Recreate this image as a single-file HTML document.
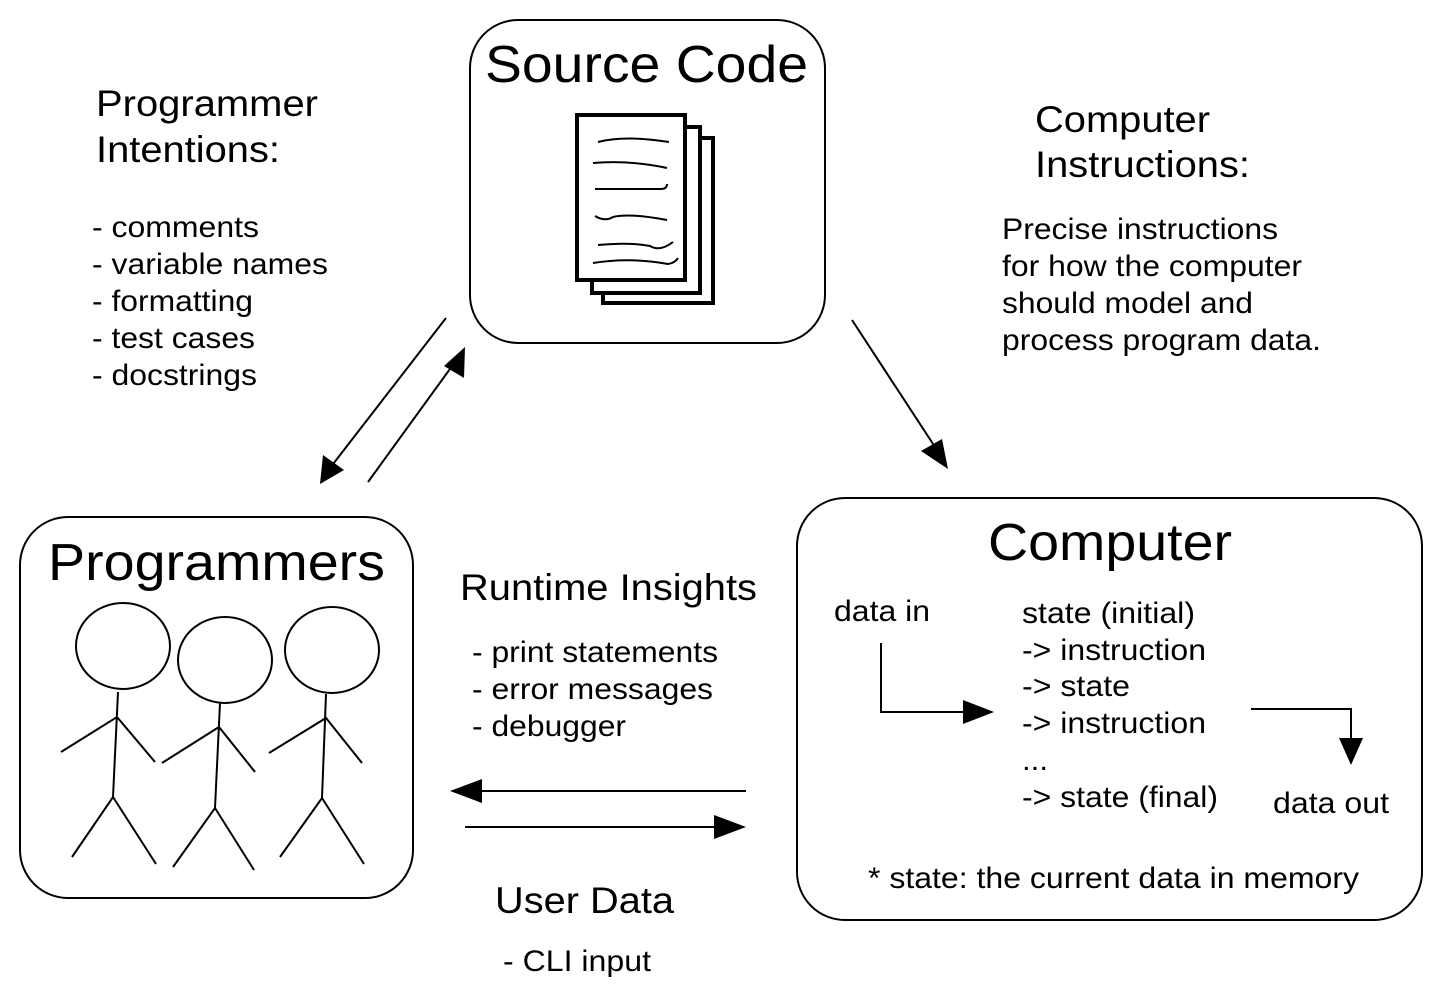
<!DOCTYPE html>
<html><head><meta charset="utf-8"><style>
html,body{margin:0;padding:0;background:#fff}
svg{display:block}
text{font-family:"Liberation Sans",Arial,sans-serif;fill:#000}
</style></head><body>
<svg width="1443" height="997" viewBox="0 0 1443 997" xmlns="http://www.w3.org/2000/svg">
<g fill="none" stroke="#000" stroke-width="2">
<rect x="470" y="20" width="355" height="323" rx="48"/>
<rect x="20" y="517" width="393" height="381" rx="48"/>
<rect x="797" y="498" width="625" height="422" rx="48"/>
</g>
<g fill="#fff" stroke="#000" stroke-width="4">
<rect x="603" y="138" width="110" height="165"/>
<rect x="592" y="127" width="108" height="166"/>
<rect x="577" y="115" width="108" height="165"/>
</g>
<g fill="none" stroke="#000" stroke-width="2">
<path d="M598 142 Q625 135 669 142"/>
<path d="M593 163 Q630 160 667 168"/>
<path d="M595 189 L661 189 Q667 189 667 184"/>
<path d="M595 216 Q605 222 613 217 Q630 213 667 220"/>
<path d="M598 245 Q630 242 650 246 Q660 252 673 242"/>
<path d="M593 263 Q630 257 668 264 Q675 263 678 258"/>
</g>
<g fill="none" stroke="#000" stroke-width="2">
<ellipse cx="123" cy="646" rx="47" ry="43"/>
<path d="M118 692 L113 797 M61 752 L117 717 L155 762 M72 857 L113 797 L156 864"/>
<ellipse cx="225" cy="660" rx="47" ry="43"/>
<path d="M220 703 L215 808 M162 763 L219 727 L255 772 M173 867 L215 808 L254 870"/>
<ellipse cx="332" cy="650" rx="47" ry="43"/>
<path d="M326 694 L322 798 M269 753 L326 718 L362 763 M280 857 L322 798 L364 864"/>
</g>
<g stroke="#000" stroke-width="2" fill="none">
<line x1="446" y1="318" x2="330" y2="468"/>
<line x1="368" y1="482" x2="455" y2="362"/>
<line x1="852" y1="320" x2="937" y2="450"/>
<line x1="746" y1="791" x2="470" y2="791"/>
<line x1="465" y1="827" x2="730" y2="827"/>
<path d="M881 643 L881 712 L975 712"/>
<path d="M1251 709 L1351 709 L1351 745"/>
</g>
<g fill="#000">
<polygon points="320,484 323,455 344,470"/>
<polygon points="465,347 444,366 464,378"/>
<polygon points="948,469 921,451 942,439"/>
<polygon points="450,791 482,779 482,803"/>
<polygon points="746,827 714,815 714,839"/>
<polygon points="994,712 963,700 963,724"/>
<polygon points="1351,765 1339,738 1363,738"/>
</g>
<g font-size="52" lengthAdjust="spacingAndGlyphs">
<text x="485" y="82" textLength="323" lengthAdjust="spacingAndGlyphs">Source Code</text>
<text x="48" y="580" textLength="337" lengthAdjust="spacingAndGlyphs">Programmers</text>
<text x="988" y="560" textLength="244" lengthAdjust="spacingAndGlyphs">Computer</text>
</g>
<g font-size="37">
<text x="96" y="116" textLength="222" lengthAdjust="spacingAndGlyphs">Programmer</text>
<text x="96" y="162" textLength="184" lengthAdjust="spacingAndGlyphs">Intentions:</text>
<text x="1035" y="132" textLength="175" lengthAdjust="spacingAndGlyphs">Computer</text>
<text x="1035" y="177" textLength="215" lengthAdjust="spacingAndGlyphs">Instructions:</text>
<text x="460" y="600" textLength="297" lengthAdjust="spacingAndGlyphs">Runtime Insights</text>
<text x="495" y="913" textLength="179" lengthAdjust="spacingAndGlyphs">User Data</text>
</g>
<g font-size="30">
<text x="92" y="237" textLength="167" lengthAdjust="spacingAndGlyphs">- comments</text>
<text x="92" y="274" textLength="236" lengthAdjust="spacingAndGlyphs">- variable names</text>
<text x="92" y="311" textLength="161" lengthAdjust="spacingAndGlyphs">- formatting</text>
<text x="92" y="348" textLength="163" lengthAdjust="spacingAndGlyphs">- test cases</text>
<text x="92" y="385" textLength="165" lengthAdjust="spacingAndGlyphs">- docstrings</text>
<text x="1002" y="239" textLength="276" lengthAdjust="spacingAndGlyphs">Precise instructions</text>
<text x="1002" y="276" textLength="300" lengthAdjust="spacingAndGlyphs">for how the computer</text>
<text x="1002" y="313" textLength="251" lengthAdjust="spacingAndGlyphs">should model and</text>
<text x="1002" y="350" textLength="319" lengthAdjust="spacingAndGlyphs">process program data.</text>
<text x="472" y="662" textLength="246" lengthAdjust="spacingAndGlyphs">- print statements</text>
<text x="472" y="699" textLength="241" lengthAdjust="spacingAndGlyphs">- error messages</text>
<text x="472" y="736" textLength="154" lengthAdjust="spacingAndGlyphs">- debugger</text>
<text x="503" y="971" textLength="148" lengthAdjust="spacingAndGlyphs">- CLI input</text>
<text x="834" y="621" textLength="96" lengthAdjust="spacingAndGlyphs">data in</text>
<text x="1022" y="623" textLength="173" lengthAdjust="spacingAndGlyphs">state (initial)</text>
<text x="1022" y="660" textLength="184" lengthAdjust="spacingAndGlyphs">-&gt; instruction</text>
<text x="1022" y="696" textLength="108" lengthAdjust="spacingAndGlyphs">-&gt; state</text>
<text x="1022" y="733" textLength="184" lengthAdjust="spacingAndGlyphs">-&gt; instruction</text>
<text x="1022" y="770" textLength="26" lengthAdjust="spacingAndGlyphs">...</text>
<text x="1022" y="807" textLength="196" lengthAdjust="spacingAndGlyphs">-&gt; state (final)</text>
<text x="1273" y="813" textLength="116" lengthAdjust="spacingAndGlyphs">data out</text>
<text x="868" y="888" textLength="491" lengthAdjust="spacingAndGlyphs">* state: the current data in memory</text>
</g>
</svg>
</body></html>
